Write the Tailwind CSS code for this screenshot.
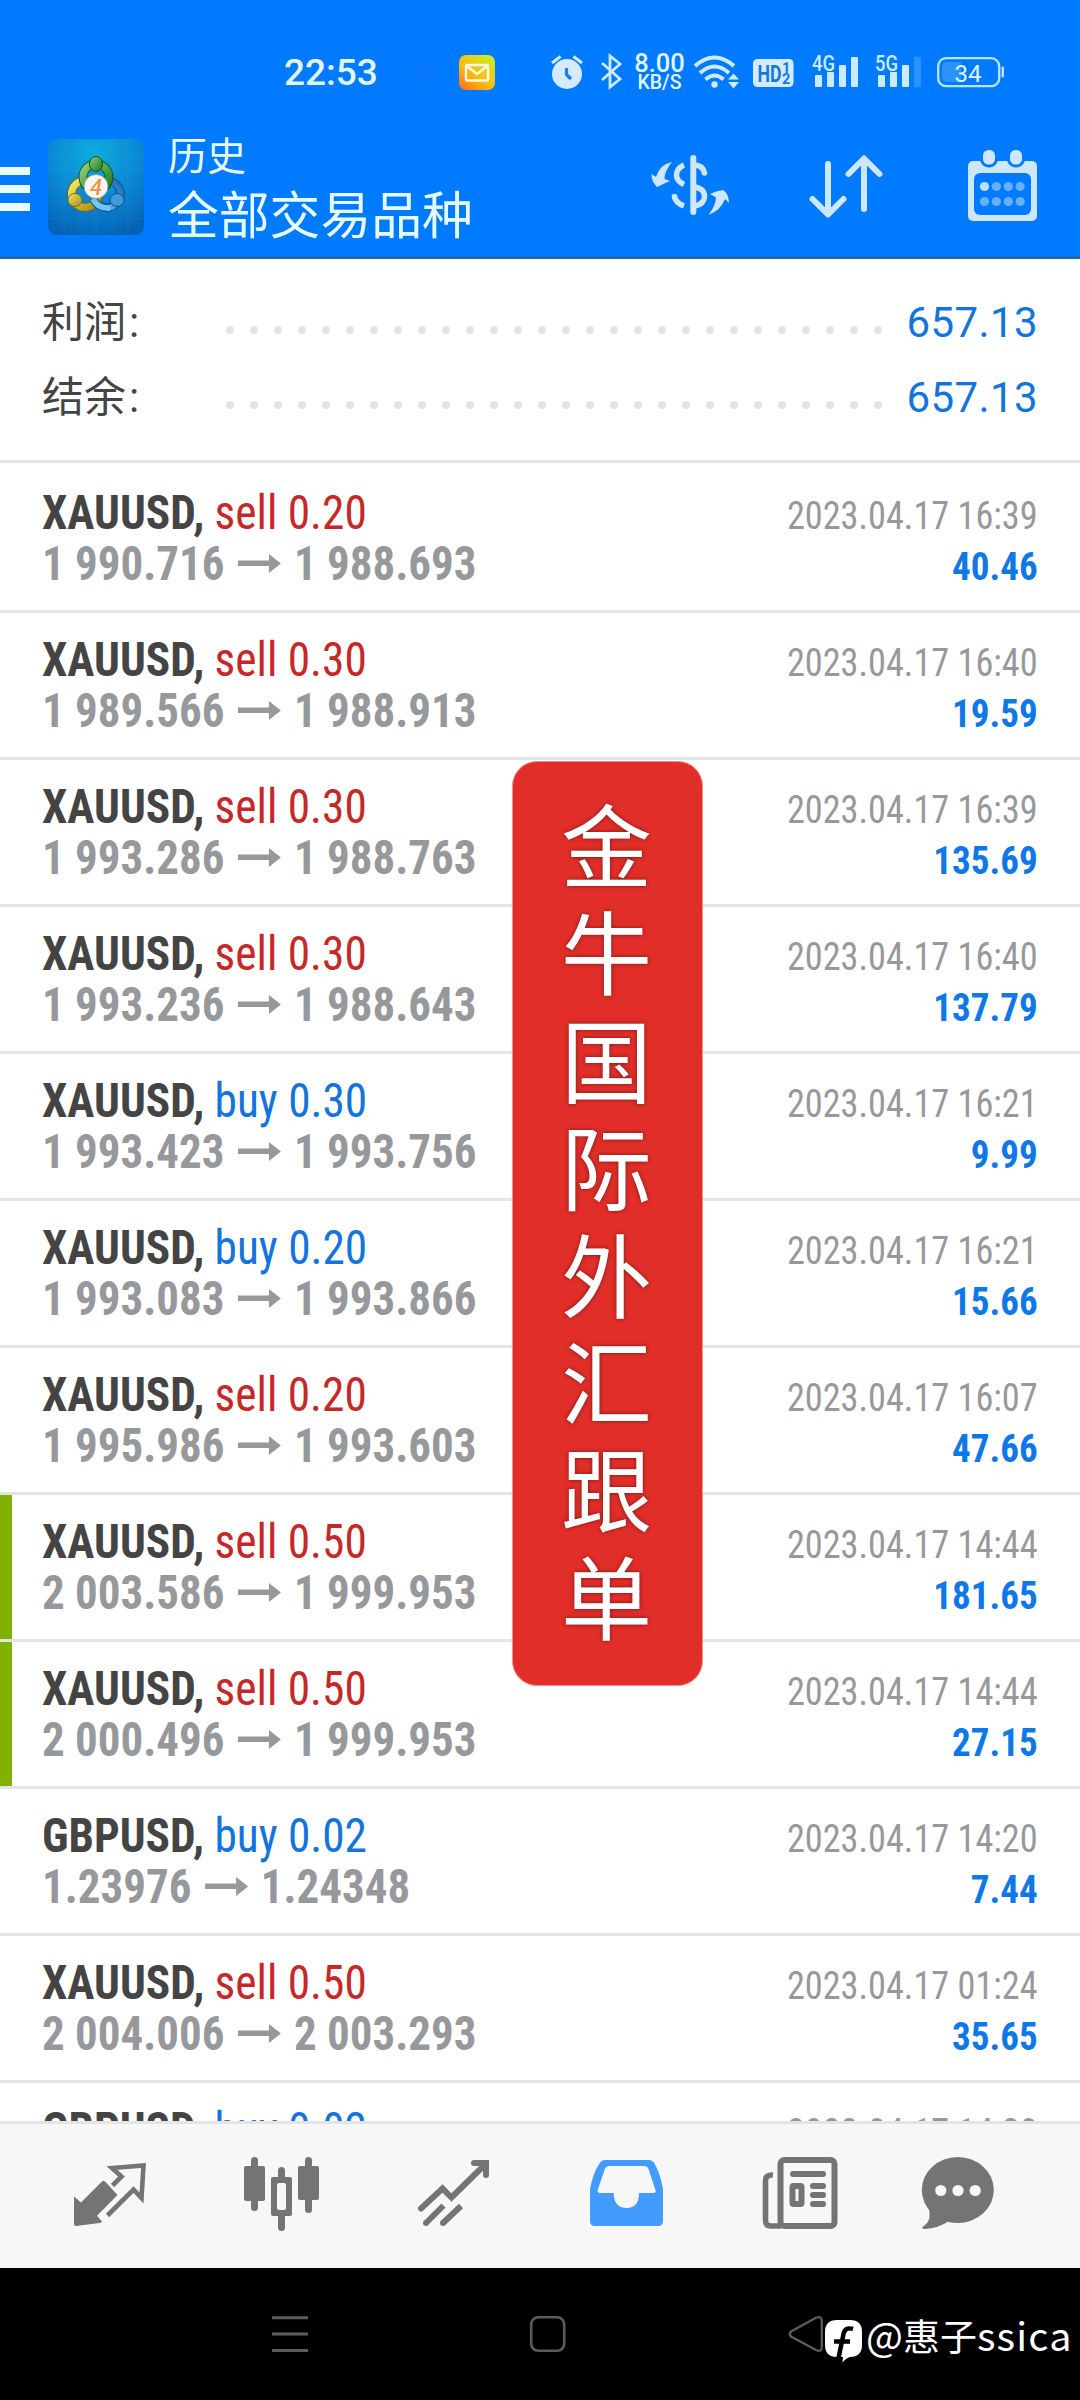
<!DOCTYPE html>
<html lang="zh-CN">
<head>
<meta charset="utf-8">
<meta name="viewport" content="width=device-width">
<title>历史</title>
<script src="https://cdn.jsdelivr.net/npm/@tailwindcss/browser@4"></script>
</head>
<body class="bg-black">
<div class="relative flex flex-col w-[1080px] h-[2400px] overflow-hidden bg-white font-[Roboto,'Noto_Sans_CJK_SC',sans-serif]">

  <header class="h-[259px] shrink-0 bg-[#007aff] border-b-3 border-[#1a6cb8] flex flex-col">
    <!-- status bar -->
    <div class="h-[130px] flex items-start pt-[53px] text-[#e0f6ff]">
      <span class="ml-[284px] w-[125px] text-[37px] leading-[39px] font-medium">22:53</span>
      <svg class="w-[32px] h-[38px]" viewBox="409 53 32 38"><path d="M410 59L420 66L425 74L430 66L441 59L436 72L425 86L414 72Z" fill="#0876f6"/></svg>
      <svg class="ml-[18px] w-[36px] h-[38px]" viewBox="459 53 36 38">
        <defs><linearGradient id="mail" x1="0" y1="1" x2=".8" y2="0"><stop offset="0" stop-color="#ff6a10"/><stop offset=".45" stop-color="#fdb813"/><stop offset="1" stop-color="#cdea22"/></linearGradient></defs>
        <rect x="459" y="55" width="36" height="35" rx="7" fill="url(#mail)"/>
        <rect x="466" y="65" width="22" height="15.500" rx="1" fill="none" stroke="#fffbe0" stroke-width="2.400"/><path d="M466 65.500L477 74L488 65.500" fill="none" stroke="#fffbe0" stroke-width="2.400"/>
      </svg>
      <svg class="ml-[56px] w-[32px] h-[38px]" viewBox="551 53 32 38">
        <circle cx="567" cy="74" r="15" fill="#d4ebff"/><path d="M552 63L560.500 56.500M573.500 56.500L582 63" stroke="#d4ebff" stroke-width="3"/><path d="M566.500 68V74.500L571 79" fill="none" stroke="#1480f0" stroke-width="3.200"/>
      </svg>
      <svg class="ml-[17px] w-[24px] h-[38px]" viewBox="600 53 24 38"><path d="M602 63L620 79L610 87V56L620 64L602 80" fill="none" stroke="#cbe8ff" stroke-width="2.800"/></svg>
      <div class="ml-[8px] w-[55px] flex flex-col items-center font-medium text-center">
        <span class="text-[25.500px] leading-[21px]">8.00</span><span class="text-[19.500px] leading-[18px]">KB/S</span>
      </div>
      <svg class="ml-[6px] w-[46px] h-[38px]" viewBox="694 53 46 38" fill="none" stroke="#cbecff" stroke-width="4">
        <path d="M696 66Q715.500 49 735 66M701 73Q715.500 60 730 73M706.500 79.500Q715.500 71.500 724.500 79.500"/><circle cx="715.500" cy="84.500" r="3.200" fill="#cbecff" stroke="none"/><path d="M734.500 73.500L740 79.500H729ZM734.500 88.500L740 82H729Z" fill="#cbecff" stroke="none"/>
      </svg>
      <svg class="ml-[14px] w-[41px] h-[38px]" viewBox="754 53 41 38" font-family="Roboto">
        <rect x="754" y="59" width="40.500" height="28" rx="4.500" fill="#d4ebff"/>
        <text x="758.500" y="81.500" font-size="23" font-weight="700" fill="#1478e0" textLength="24" lengthAdjust="spacingAndGlyphs">HD</text>
        <text x="783" y="73" font-size="14.500" font-weight="700" fill="#1478e0">1</text><text x="783" y="84" font-size="14.500" font-weight="700" fill="#1478e0">2</text>
      </svg>
      <svg class="ml-[17px] w-[48px] h-[38px]" viewBox="812 53 48 38" font-family="Roboto" fill="#cbecff">
        <text x="813" y="70.500" font-size="21.500" font-weight="500" textLength="23" lengthAdjust="spacingAndGlyphs">4G</text>
        <rect x="816" y="75" width="7" height="12" rx="1"/><rect x="828" y="72" width="7" height="15" rx="1"/><rect x="840" y="65" width="7" height="22" rx="1"/><rect x="852" y="57" width="7" height="30" rx="1"/>
      </svg>
      <svg class="ml-[15px] w-[48px] h-[38px]" viewBox="875 53 48 38" font-family="Roboto" fill="#cbecff">
        <text x="876" y="70.500" font-size="21.500" font-weight="500" textLength="23" lengthAdjust="spacingAndGlyphs">5G</text>
        <rect x="879" y="75" width="7" height="12" rx="1"/><rect x="891" y="72" width="7" height="15" rx="1"/><rect x="903" y="65" width="7" height="22" rx="1"/><rect x="915" y="57" width="7" height="30" rx="1" fill="#2a92ff"/>
      </svg>
      <svg class="ml-[14px] w-[70px] h-[38px]" viewBox="937 53 70 38" font-family="Roboto">
        <path d="M948 62H962V82H948Q943 82 943 77V67Q943 62 948 62Z" fill="#2b93ff"/>
        <rect x="939.200" y="58.200" width="61" height="28" rx="8" fill="none" stroke="#b9e4ff" stroke-width="2.300"/><rect x="1002.500" y="66.500" width="2.500" height="11" rx="1" fill="#b9e4ff"/>
        <text x="955.500" y="81.500" font-size="24" fill="#e0f6ff">34</text>
      </svg>
    </div>
    <!-- toolbar -->
    <div class="h-[126px] flex items-start">
      <svg class="mt-[37px] w-[30px] h-[44px]" viewBox="0 0 30 44" fill="#e9fbff"><path d="M0 0H30V8H0ZM0 18H30V26H0ZM0 36H30V44H0Z"/></svg>
      <svg class="ml-[18px] mt-[9px] w-[96px] h-[96px]" viewBox="0 0 96 96">
        <defs>
          <radialGradient id="bg" cx=".48" cy=".15" r=".9"><stop offset="0" stop-color="#0cadde"/><stop offset=".55" stop-color="#0a86d2"/><stop offset="1" stop-color="#0462b4"/></radialGradient>
          <linearGradient id="g" x1="0" y1="0" x2="1" y2="1"><stop offset="0" stop-color="#8fd07e"/><stop offset="1" stop-color="#187a22"/></linearGradient>
          <linearGradient id="y" x1="0" y1="0" x2="1" y2="1"><stop offset="0" stop-color="#f4ea62"/><stop offset="1" stop-color="#a48a1c"/></linearGradient>
          <linearGradient id="b" x1="1" y1="0" x2="0" y2="1"><stop offset="0" stop-color="#1b6db6"/><stop offset="1" stop-color="#74c6f2"/></linearGradient>
        </defs>
        <rect width="96" height="96" rx="9" fill="url(#bg)"/>
        <path d="M16 0V96M32 0V96M48 0V96M64 0V96M80 0V96M0 16H96M0 32H96M0 48H96M0 64H96M0 80H96" stroke="#4cc0f2" stroke-opacity=".14"/>
        <circle cx="59" cy="55" r="13.500" fill="none" stroke="#0b4f8e" stroke-width="8"/><circle cx="59" cy="55" r="13.500" fill="none" stroke="url(#b)" stroke-width="6"/>
        <circle cx="37" cy="55" r="13.500" fill="none" stroke="#726512" stroke-width="9"/><circle cx="37" cy="55" r="13.500" fill="none" stroke="url(#y)" stroke-width="7"/>
        <circle cx="48" cy="38" r="13" fill="none" stroke="#14511c" stroke-width="9"/><circle cx="48" cy="38" r="13" fill="none" stroke="url(#g)" stroke-width="7"/>
        <path d="M45 60Q50 70 62 69" stroke="#0b4f8e" stroke-width="8" fill="none"/><path d="M45 60Q50 70 62 69" stroke="#74c6f2" stroke-width="6" fill="none"/>
        <ellipse cx="48" cy="25" rx="6.500" ry="7.500" fill="url(#g)" stroke="#14511c"/><ellipse cx="27" cy="61" rx="7" ry="6.500" fill="url(#y)" stroke="#7a6a14"/><ellipse cx="69" cy="61" rx="7" ry="6.500" fill="#3f9bd8" stroke="#0b4f8e"/>
        <circle cx="48" cy="47.500" r="12" fill="#f5f5f5" stroke="#94866c" stroke-width=".7"/>
        <text x="42" y="55.500" font-family="Roboto" font-size="22" font-weight="500" font-style="italic" fill="#ee9648">4</text>
      </svg>
      <div class="ml-[24px] w-[482px] text-[#e6fbff] font-['Noto_Sans_CJK_SC',sans-serif] whitespace-nowrap">
        <div class="text-[39px] leading-[48px] mt-[-1px]">历史</div>
        <div class="text-[50.800px] leading-[60px] mt-[5px]">全部交易品种</div>
      </div>
      <svg class="mt-[22px] w-[80px] h-[66px]" viewBox="650 152 80 66" fill="#cfe6ff">
        <path d="M672 162Q660 164 656 177L651.500 174Q651.500 182 657 187Q662 184.500 670 181L664.500 179Q664.500 171 672 162Z"/>
        <path d="M708.500 215Q721 210 725 199L729 203Q729 195 723.500 190Q717 190.500 710 194L716 197.500Q716 205 708.500 215Z"/>
        <rect x="690.300" y="155" width="6" height="60" rx="3"/>
        <path d="M684 165Q676.500 168.500 676.500 175Q676.500 181 684 184.500M674.500 197Q676 203 684 206M695 165Q703 165.500 704.500 173M695 187Q705 189 704.500 197Q704 204 695 206" fill="none" stroke="#cfe6ff" stroke-width="5.500"/><circle cx="674.500" cy="196.500" r="2.800"/><circle cx="704.500" cy="173" r="2.800"/>
      </svg>
      <svg class="ml-[78px] mt-[22px] w-[76px] h-[70px]" viewBox="808 152 76 70" fill="none" stroke="#cfe6ff" stroke-width="6" stroke-linecap="round" stroke-linejoin="round"><path d="M828 164V214M812.500 199L828 214.500L843.500 199M864 209V159M848.500 174L864 158.500L879.500 174"/></svg>
      <svg class="ml-[82px] mt-[18px] w-[74px] h-[76px]" viewBox="966 148 74 76">
        <rect x="968" y="161" width="69" height="60" rx="5" fill="#cfe6ff"/><rect x="974" y="173" width="57" height="42" rx="6" fill="#007aff"/>
        <g fill="#cfe6ff" stroke="#007aff" stroke-width="3"><rect x="981.500" y="148.500" width="15" height="17.500" rx="7"/><rect x="1008.500" y="148.500" width="15" height="17.500" rx="7"/></g>
        <g fill="#66b0ff"><circle cx="984.500" cy="186.500" r="4.600" fill="#b9e2ff"/><circle cx="996.400" cy="186.500" r="4.600"/><circle cx="1008.300" cy="186.500" r="4.600"/><circle cx="1020.200" cy="186.500" r="4.600"/><circle cx="984.500" cy="201.500" r="4.600"/><circle cx="996.400" cy="201.500" r="4.600"/><circle cx="1008.300" cy="201.500" r="4.600"/><circle cx="1020.200" cy="201.500" r="4.600"/></g>
      </svg>
    </div>
  </header>

  <!-- totals -->
  <section class="h-[204px] shrink-0 border-b-3 border-[#e4e4e4] pt-[26px] px-[42px]">
    <div class="h-[75px] flex items-center">
      <span class="w-[184px] text-[42px] leading-[75px] text-[#444]">利润<span class="ml-[3px]">:</span></span>
      <svg class="w-[656px] h-[8px] mt-[15px]"><line x1="4" y1="4" x2="653" y2="4" stroke="#e4e4e4" stroke-width="8" stroke-linecap="round" stroke-dasharray="0 24"/></svg>
      <span class="ml-auto text-[42px] leading-[75px] tracking-[.4px] text-[#1274dc]">657.13</span>
    </div>
    <div class="h-[75px] flex items-center">
      <span class="w-[184px] text-[42px] leading-[75px] text-[#444]">结余<span class="ml-[3px]">:</span></span>
      <svg class="w-[656px] h-[8px] mt-[15px]"><line x1="4" y1="4" x2="653" y2="4" stroke="#e4e4e4" stroke-width="8" stroke-linecap="round" stroke-dasharray="0 24"/></svg>
      <span class="ml-auto text-[42px] leading-[75px] tracking-[.4px] text-[#1274dc]">657.13</span>
    </div>
  </section>

  <main id="deals" class="flex-1 min-h-0 overflow-hidden pt-[3px] [font-stretch:75%] font-['Roboto_Condensed',Roboto,sans-serif]"></main>

  <!-- tab bar -->
  <nav class="h-[147px] shrink-0 border-t-3 border-[#e4e4e4] bg-[#f7f7f7] flex items-start pt-[28px]">
    <svg class="ml-[70px] w-[80px] h-[80px]" viewBox="70 2152 80 80"><path d="M74 2196.500L81 2202.500L102 2181.500Q103.500 2180 105 2181.500L117.500 2195L97 2215.700L102 2221.500Q101 2223 99.500 2223L76 2226Q74 2226 74 2224Z" fill="#747474"/><path d="M112.500 2185.500L121.500 2176.500L112 2168L143.500 2165.500L141.500 2198L133.500 2189.500L107.500 2215.500" fill="none" stroke="#747474" stroke-width="4.600"/></svg>
    <svg class="ml-[90px] w-[84px] h-[84px]" viewBox="240 2152 84 84" fill="#747474"><rect x="244" y="2166" width="21" height="35" rx="2"/><rect x="251" y="2157" width="7" height="54" rx="3.500"/><path fill-rule="evenodd" d="M273 2177H290Q292 2177 292 2179V2214Q292 2216 290 2216H273Q271 2216 271 2214V2179Q271 2177 273 2177ZM279 2183Q277 2183 277 2185V2208Q277 2210 279 2210H284Q286 2210 286 2208V2185Q286 2183 284 2183Z"/><path d="M278 2178V2170.500Q278 2167 281.500 2167T285 2170.500V2178ZM278 2215V2227.500Q278 2231 281.500 2231T285 2227.500V2215Z"/><rect x="298" y="2166" width="21" height="34" rx="2"/><rect x="305" y="2157" width="7" height="56" rx="3.500"/></svg>
    <svg class="ml-[90px] w-[80px] h-[80px]" viewBox="414 2152 80 80" fill="none" stroke="#747474" stroke-width="6"><path d="M421 2208.500L442.500 2188.500L451.500 2197.500L486 2163.500M474 2163H486V2175" stroke-linecap="round"/><path d="M426 2223L443.500 2205.500M443 2223L461 2206"/><g fill="#747474" stroke="none"><circle cx="426" cy="2223" r="3"/><circle cx="443" cy="2223" r="3"/><path d="M478 2160H486.500Q489 2160 489 2162.500V2170Z"/></g></svg>
    <svg class="ml-[92px] w-[80px] h-[80px]" viewBox="586 2152 80 80"><path fill-rule="evenodd" fill="#429bff" d="M605 2160H649Q652.500 2160 654.500 2163.500Q660 2173 663 2189V2221Q663 2226 658 2226H595Q590 2226 590 2221V2189Q593 2173 599.500 2163.500Q601.500 2160 605 2160ZM609 2166Q606 2166 605 2168.500L597.700 2190Q597 2193 600 2193H613.700Q614 2208 626.500 2208T639 2193H653Q656.500 2193 655.500 2190L648.500 2169Q647.500 2166 644 2166Z"/></svg>
    <svg class="ml-[92px] w-[84px] h-[84px]" viewBox="758 2152 84 84" fill="none" stroke="#747474" stroke-width="6"><rect x="780.500" y="2160" width="54" height="66" rx="4"/><path d="M773 2175Q765.500 2174.500 765.500 2181V2220Q765.500 2226 771 2226H781" stroke-width="5.600"/><path d="M793 2174H823M813 2186H823M813 2195H823M813 2204H823" stroke-linecap="round"/><rect x="792.500" y="2186" width="9" height="18" rx="1"/></svg>
    <svg class="ml-[76px] w-[80px] h-[84px]" viewBox="918 2152 80 84" fill="#747474"><ellipse cx="957.800" cy="2190" rx="36" ry="33"/><path d="M928 2206Q933 2221 922.500 2227Q922 2229 925 2229Q938 2228.500 949 2221Z"/><g fill="#f7f7f7"><circle cx="940.800" cy="2190.500" r="5.600"/><circle cx="958" cy="2190.500" r="5.600"/><circle cx="975.200" cy="2190.500" r="5.600"/></g></svg>
  </nav>

  <!-- system navigation -->
  <footer class="h-[132px] shrink-0 bg-black flex items-start pt-[46px]">
    <svg class="ml-[270px] w-[40px] h-[40px]" viewBox="270 2314 40 40"><path d="M272 2317.700H308M272 2334H308M272 2350.500H308" stroke="#5c5c5c" stroke-width="3"/></svg>
    <svg class="ml-[218px] w-[40px] h-[40px]" viewBox="528 2314 40 40"><rect x="531.200" y="2317.300" width="33" height="33.500" rx="7" fill="none" stroke="#5c5c5c" stroke-width="2.600"/></svg>
    <svg class="ml-[218px] w-[38px] h-[40px]" viewBox="786 2314 38 40"><path d="M791 2331.500L816 2317.800Q821.800 2315.500 821.800 2321V2347Q821.800 2352.500 816 2350L791 2336.500Q788.500 2334 791 2331.500Z" fill="none" stroke="#5c5c5c" stroke-width="2.300"/></svg>
    <svg class="ml-[1px] mt-[4px] w-[38px] h-[46px]" viewBox="825 2318 38 46"><path d="M837 2320H850Q862 2320 862 2332V2345Q862 2357 850 2357Q846 2358 842.500 2362.500L843 2357H837Q825 2357 825 2345V2332Q825 2320 837 2320Z" fill="#fff"/><path d="M853 2329Q845 2326.500 843.500 2334L838.500 2358M834 2341.500H850" fill="none" stroke="#000" stroke-width="4.500"/></svg>
    <span class="ml-[3px] mt-[-4px] text-white text-[37px] leading-[48px] whitespace-nowrap font-['Noto_Sans_CJK_SC',sans-serif]"><span class="text-[39px]">@</span>惠子<span class="text-[39.500px] tracking-[1.200px]">ssica</span></span>
  </footer>

  <!-- floating banner -->
  <div class="absolute left-[512px] top-[761px] w-[191px] h-[925px] rounded-[25px] bg-[#e22e29] border border-[#f0908c] flex flex-col items-center pt-[26px] pr-[2px] text-white text-[91px] leading-[107.400px] font-['Noto_Sans_CJK_SC',sans-serif] [text-shadow:0_0_4px_rgba(90,20,20,.8)]">
    <span>金</span><span>牛</span><span>国</span><span>际</span><span>外</span><span>汇</span><span>跟</span><span>单</span>
  </div>
</div>

<script>
const deals = [
  ['XAUUSD', 'sell 0.20', '1 990.716', '1 988.693', '2023.04.17 16:39', '40.46'],
  ['XAUUSD', 'sell 0.30', '1 989.566', '1 988.913', '2023.04.17 16:40', '19.59'],
  ['XAUUSD', 'sell 0.30', '1 993.286', '1 988.763', '2023.04.17 16:39', '135.69'],
  ['XAUUSD', 'sell 0.30', '1 993.236', '1 988.643', '2023.04.17 16:40', '137.79'],
  ['XAUUSD', 'buy 0.30', '1 993.423', '1 993.756', '2023.04.17 16:21', '9.99'],
  ['XAUUSD', 'buy 0.20', '1 993.083', '1 993.866', '2023.04.17 16:21', '15.66'],
  ['XAUUSD', 'sell 0.20', '1 995.986', '1 993.603', '2023.04.17 16:07', '47.66'],
  ['XAUUSD', 'sell 0.50', '2 003.586', '1 999.953', '2023.04.17 14:44', '181.65', true],
  ['XAUUSD', 'sell 0.50', '2 000.496', '1 999.953', '2023.04.17 14:44', '27.15', true],
  ['GBPUSD', 'buy 0.02', '1.23976', '1.24348', '2023.04.17 14:20', '7.44'],
  ['XAUUSD', 'sell 0.50', '2 004.006', '2 003.293', '2023.04.17 01:24', '35.65'],
  ['GBPUSD', 'buy 0.02', '1.23976', '1.24348', '2023.04.17 14:20', '7.44'],
];
document.getElementById('deals').innerHTML = deals.map(([sym, side, from, to, time, profit, marked]) => `
  <div class="h-[147px] border-b-3 border-[#e4e4e4] flex">
    <div class="${marked ? 'w-[12px] bg-[#80b000]' : 'w-[12px]'}"></div>
    <div class="pl-[30px] pt-[21px] text-[48px] leading-[51px] whitespace-nowrap">
      <div class="origin-left [transform:scaleX(.944)]"><span class="font-bold text-[#444]">${sym},</span> <span class="${side[0] === 's' ? 'text-[#c62828]' : 'text-[#1274dc]'}">${side}</span></div>
      <div class="w-fit font-bold text-[#97989c] flex items-center origin-left [transform:scaleX(.937)]">${from}<svg class="w-[46px] h-[19px] mx-[14px]" viewBox="0 0 43 19" preserveAspectRatio="none"><path d="M0 6.500H31V0L43 9.500L31 19V12H0Z" fill="#97989c"/></svg>${to}</div>
    </div>
    <div class="ml-auto pr-[42px] pt-[25px] text-[39px] leading-[51px] text-right whitespace-nowrap">
      <div class="text-[#97989c] origin-right [transform:scaleX(.93)]">${time}</div>
      <div class="font-bold text-[#0f78e8] origin-right [transform:scaleX(.95)]">${profit}</div>
    </div>
  </div>`).join('');
</script>
</body>
</html>
